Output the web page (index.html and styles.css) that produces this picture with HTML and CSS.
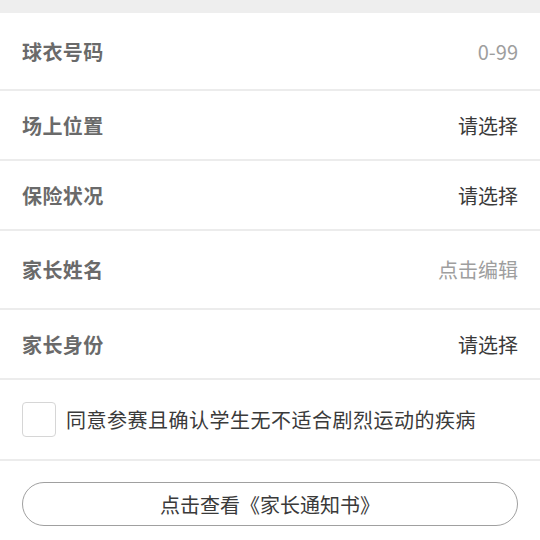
FILE: index.html
```html
<!DOCTYPE html>
<html lang="zh">
<head>
<meta charset="utf-8">
<link rel="stylesheet" href="styles.css">
</head>
<body>
<div class="top"></div>
<div class="form">
  <div class="row r76"><span class="label">球衣号码</span><span class="value ph">0-99</span></div>
  <div class="row r68"><span class="label">场上位置</span><span class="value">请选择</span></div>
  <div class="row r68"><span class="label">保险状况</span><span class="value">请选择</span></div>
  <div class="row r77"><span class="label">家长姓名</span><span class="value ph">点击编辑</span></div>
  <div class="row r68"><span class="label">家长身份</span><span class="value">请选择</span></div>
  <div class="row agree"><span class="box"></span><span class="agree-text">同意参赛且确认学生无不适合剧烈运动的疾病</span></div>
</div>
<div class="actions">
  <div class="btn">点击查看《家长通知书》</div>
</div>
</body>
</html>
```
FILE: styles.css
```css
html, body {
  margin: 0;
  padding: 0;
  background: #ffffff;
  font-family: "Noto Sans CJK SC", "Noto Sans", sans-serif;
}
.top {
  height: 13px;
  background: #eeeeee;
}
.form {
  display: flex;
  flex-direction: column;
}
.row {
  display: flex;
  align-items: center;
  justify-content: space-between;
  padding: 0 22px;
  border-bottom: 2px solid #ececec;
  box-sizing: content-box;
}
.r76 { height: 76px; }
.r68 { height: 68px; }
.r77 { height: 77px; }
.label {
  font-size: 20px;
  font-weight: 700;
  color: #6a6a6a;
  letter-spacing: 0.4px;
}
.value {
  font-size: 20px;
  color: #3a3a3a;
}
.value.ph {
  color: #9e9e9e;
}
.agree {
  height: 79px;
  justify-content: flex-start;
  gap: 10px;
}
.box {
  width: 32px;
  height: 33px;
  border: 1px solid #d6d6d6;
  border-radius: 4px;
  flex: none;
}
.agree-text {
  font-size: 20px;
  color: #3a3a3a;
  letter-spacing: 0.5px;
}
.actions {
  padding: 21px 22px 0;
}
.btn {
  height: 42px;
  border: 1.5px solid #a0a0a0;
  border-radius: 22px;
  display: flex;
  align-items: center;
  justify-content: center;
  font-size: 20px;
  color: #3a3a3a;
}
```
